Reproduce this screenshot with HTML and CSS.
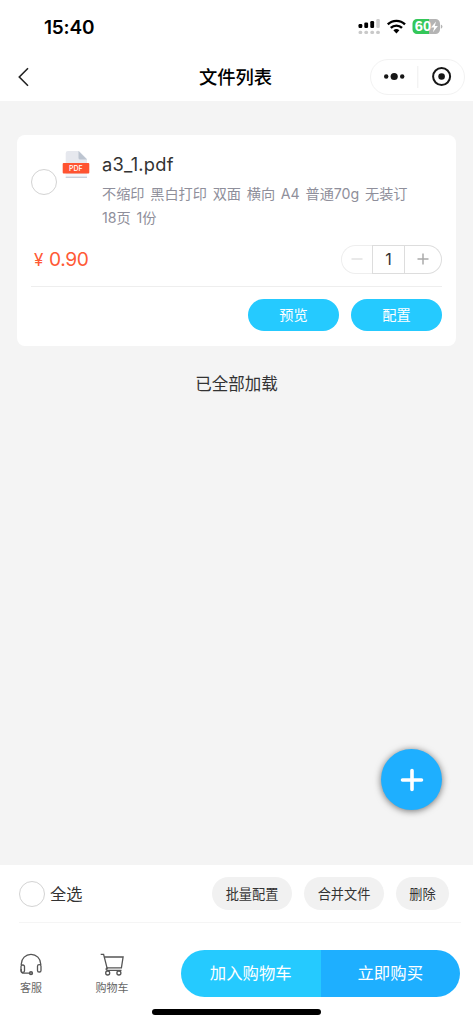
FILE: index.html
```html
<!DOCTYPE html>
<html lang="zh-CN">
<head>
<meta charset="utf-8">
<meta name="viewport" content="width=device-width, initial-scale=1">
<title>文件列表</title>
<link rel="stylesheet" href="styles.css">
</head>
<body>
<div class="app">
  <header class="header">
    <div class="status">
      <span class="time">15:40</span>
      <svg class="status-icons" width="86" height="20" viewBox="0 0 86 20">
        <g fill="#000"><rect x="1.500" y="7" width="3.800" height="4" rx="1.200"/><rect x="7.300" y="5.600" width="3.800" height="5.400" rx="1.200"/><rect x="13.300" y="4" width="3.800" height="7" rx="1.200"/></g>
        <rect x="19.300" y="2" width="3.500" height="9" rx="1.200" fill="#ccc"/>
        <g fill="#c9c9c9"><rect x="1.500" y="13.700" width="3.800" height="3.300" rx="1.500"/><rect x="7.300" y="13.700" width="3.800" height="3.300" rx="1.500"/><rect x="13.300" y="13.700" width="3.800" height="3.300" rx="1.500"/><rect x="19.100" y="13.700" width="3.800" height="3.300" rx="1.500"/></g>
        <g fill="none" stroke="#000" stroke-width="2.400"><path d="M30.800 7.400a12.200 12.200 0 0 1 17.200 0"/><path d="M33.800 10.900a8 8 0 0 1 11.200 0"/></g>
        <path d="M36.400 13.300a4.500 4.500 0 0 1 6 0l-3 3.300z"/>
        <path d="M60 2H72V17H60a4.500 4.500 0 0 1-4.500-4.500V6.500A4.500 4.500 0 0 1 60 2z" fill="#34c759"/>
        <path d="M72 2h6.500a4.500 4.500 0 0 1 4.500 4.500v6a4.500 4.500 0 0 1-4.500 4.500H72z" fill="#b4b4b4"/>
        <path d="M83.800 7.400a2.300 2.300 0 0 1 0 4.400z" fill="#b4b4b4"/>
        <text class="battery-text" x="57.800" y="14.400" textLength="16.400" lengthAdjust="spacingAndGlyphs">60</text>
        <path d="M79 4.500l-5 6h3.200l-1.300 4.800 5-6.200h-3.100z" fill="#fff"/>
      </svg>
    </div>
    <div class="nav">
      <svg class="back" width="14" height="20" viewBox="0 0 14 20"><path d="M11 1.300L2.300 10l8.700 8.700" fill="none" stroke="#222" stroke-width="1.600"/></svg>
      <h1 class="title">文件列表</h1>
      <div class="capsule">
        <svg width="94" height="36" viewBox="0 0 94 36"><g fill="#171717"><circle cx="15.200" cy="17.500" r="2.200"/><circle cx="23.200" cy="17.500" r="3.600"/><circle cx="31.200" cy="17.500" r="2.200"/><circle cx="70.600" cy="17.500" r="3.300"/></g><circle cx="70.600" cy="17.500" r="8.500" fill="none" stroke="#171717" stroke-width="2"/><path d="M46.800 7v22" stroke="#eee"/></svg>
      </div>
    </div>
  </header>

  <main class="content">
    <article class="card">
      <div class="file">
        <span class="radio"></span>
        <svg class="pdf" width="28" height="30" viewBox="0 0 28 30">
          <path d="M6 1h11l8 8v17.500a1.500 1.500 0 0 1-1.500 1.500H5.200A1.500 1.500 0 0 1 3.700 26.500V3.300A2.300 2.300 0 0 1 6 1z" fill="#e6e8ee"/>
          <path d="M16.500 1L25 9.500h-7a1.500 1.500 0 0 1-1.500-1.500z" fill="#bcc4d0"/>
          <path d="M3.700 25h21.300" stroke="#fff" stroke-width="1.300"/>
          <path d="M3.700 27.500h21.300" stroke="#ccd0da"/>
          <rect x="0.700" y="13" width="26.600" height="10.500" rx="1" fill="#ff5330"/>
          <text class="pdf-text" x="7" y="21.200">PDF</text>
        </svg>
        <div class="file-info">
          <h2 class="file-name">a3_1.pdf</h2>
          <p class="meta">不缩印 黑白打印 双面 横向 A4 普通70g 无装订</p>
          <p class="meta">18页 1份</p>
        </div>
      </div>
      <div class="price-row">
        <div class="price"><span class="yen">¥</span>0.90</div>
        <div class="stepper">
          <span class="step minus"><svg width="12" height="12"><path d="M0.500 6h11" stroke="#ddd" stroke-width="1.300"/></svg></span>
          <span class="quantity">1</span>
          <span class="step plus"><svg width="12" height="12"><path d="M0.500 6h11M6 0.500v11" stroke="#aaa" stroke-width="1.500"/></svg></span>
        </div>
      </div>
      <div class="actions"><span class="action">预览</span><span class="action">配置</span></div>
    </article>
    <p class="loaded">已全部加载</p>
  </main>

  <footer class="footer">
    <div class="bulk">
      <span class="radio"></span><span class="all">全选</span>
      <div class="chips"><span class="chip">批量配置</span><span class="chip">合并文件</span><span class="chip small">删除</span></div>
    </div>
    <div class="checkout">
      <div class="link service">
        <svg width="24" height="24" viewBox="0 0 24 24" fill="none" stroke="#555" stroke-width="1.300"><path d="M2.300 13V12a9.700 9.700 0 0 1 19.400 0v1"/><rect x="2" y="13" width="3.500" height="7.300" rx="1.600"/><rect x="18.500" y="12.700" width="3.500" height="7.300" rx="1.600"/><path d="M2.200 17v2a2.200 2.200 0 0 0 2.200 2.200H10.500"/><circle cx="12" cy="21.200" r="1.500" fill="#888"/></svg>
        <span>客服</span>
      </div>
      <div class="link cart">
        <svg width="24" height="24" viewBox="0 0 24 24" fill="none" stroke="#555" stroke-width="1.300"><path d="M0.700 2.300h2.900l3.800 15"/><path d="M4.300 5h18.800l-1.700 10.800H6.900"/><path d="M21.500 18.300H7.500a1.200 1.200 0 0 1-.3-2.400"/><circle cx="7.700" cy="21" r="2"/><circle cx="18.900" cy="21" r="2"/></svg>
        <span>购物车</span>
      </div>
      <div class="buy"><span class="buy-half add">加入购物车</span><span class="buy-half now">立即购买</span></div>
    </div>
    <div class="home"></div>
  </footer>
  <div class="fab"><svg width="24" height="24"><path d="M2.500 12h19M12 2.500v19" stroke="#fff" stroke-width="3.600" stroke-linecap="round"/></svg></div>
</div>
</body>
</html>
```
FILE: styles.css
```css
* { box-sizing: border-box; }
body { margin: 0; background: #f4f4f4; color: #333; font-family: Inter, "Noto Sans CJK SC", sans-serif; }
h1, h2, p { margin: 0; font-weight: 400; }
svg { display: block; flex: none; }
.app { position: relative; display: flex; flex-direction: column; width: 473px; height: 1024px; overflow: hidden; }
.header { height: 101px; background: #fff; }
.status { display: flex; justify-content: space-between; height: 53px; padding: 17px 30px 0 44px; }
.time { color: #000; font-size: 19px; font-weight: 600; line-height: 21px; letter-spacing: -0.2px; }
.battery-text { fill: #fff; font: 700 14px "Liberation Sans", Inter, sans-serif; }
.nav { display: grid; grid-template-columns: 95px 1fr 95px; align-items: center; height: 47px; padding: 0 8px 0 8px; }
.back { margin-left: 9px; }
.title { color: #000; font-size: 18.300px; font-weight: 500; line-height: 26px; text-align: center; transform: translateX(-1px); }
.capsule { width: 95px; height: 36px; border: 1px solid #f2f2f2; border-radius: 18px; display: flex; align-items: center; }
.content { flex: 1; padding: 34px 17px 0; }
.card { height: 211px; padding: 13px 14px 0; background: #fff; border-radius: 8px; }
.file { display: flex; align-items: flex-start; height: 88px; }
.radio { width: 26px; height: 26px; flex: none; border: 1.500px solid #d3d3d3; border-radius: 50%; background: #fff; }
.file .radio { margin-top: 21px; }
.pdf { margin: 2px 0 0 5px; }
.pdf-text { fill: #fff; font: 500 7px Inter, sans-serif; }
.file-info { margin: 4px 0 0 12px; white-space: nowrap; }
.file-name { font-size: 18.300px; line-height: 25px; letter-spacing: 0.250px; }
.meta { color: #8f8f9b; font-size: 14.200px; line-height: 24px; word-spacing: 1.900px; letter-spacing: -0.050px; }
.file-name + .meta { margin-top: 5px; }
.price-row { display: flex; align-items: center; justify-content: space-between; height: 51px; padding-bottom: 4px; border-bottom: 1px solid #eee; }
.price { padding-left: 3px; color: #ff5a36; font-size: 19.200px; line-height: 24px; letter-spacing: -0.400px; }
.yen { display: inline-block; width: 15px; font-size: 17px; }
.stepper { display: flex; width: 101px; height: 29px; }
.step, .quantity { display: flex; align-items: center; justify-content: center; border: 1px solid #ddd; }
.minus { width: 31px; border-color: #eee; border-right: 0; border-radius: 15px 0 0 15px; }
.plus { width: 37px; border-left: 0; border-radius: 0 15px 15px 0; }
.quantity { width: 33px; padding-bottom: 1px; font-size: 16px; }
.actions { display: flex; justify-content: flex-end; gap: 12px; padding-top: 12px; }
.action { width: 91px; height: 32px; border-radius: 16px; background: #25caff; color: #fff; font-size: 14.200px; line-height: 32px; text-align: center; }
.loaded { margin-top: 26px; font-size: 16.500px; line-height: 24px; text-align: center; }
.footer { height: 159px; background: #fff; }
.bulk { display: flex; align-items: center; height: 58px; margin: 0 12px 0 19px; border-bottom: 1px solid #f5f5f5; }
.all { margin-left: 5px; font-size: 16.200px; line-height: 24px; }
.chips { display: flex; gap: 12px; margin: 0 12px 0 auto; }
.chip { width: 80px; height: 33px; border-radius: 17px; background: #f1f1f1; font-size: 13.200px; line-height: 34px; text-align: center; }
.chip.small { width: 53px; }
.checkout { display: flex; height: 86px; padding: 27px 13px 0 12px; }
.link { display: flex; flex-direction: column; align-items: center; padding-top: 2px; color: #666; font-size: 11px; line-height: 18px; white-space: nowrap; }
.link svg { margin-bottom: 3px; }
.service { width: 38px; }
.cart { width: 40px; margin-left: 42px; }
.buy { display: flex; width: 279px; height: 47px; margin-left: auto; border-radius: 24px; overflow: hidden; color: #fff; font-size: 16.400px; line-height: 47px; text-align: center; }
.buy-half { flex: 1; }
.add { background: #25caff; }
.now { background: #1eafff; }
.home { width: 169px; height: 6px; margin: 0 auto; border-radius: 3px; background: #000; }
.fab { position: absolute; left: 381px; top: 749px; width: 61px; height: 61px; border-radius: 50%; display: flex; align-items: center; justify-content: center; background: #1eafff; box-shadow: 0 1px 7px rgba(0,0,0,.55); }
```
